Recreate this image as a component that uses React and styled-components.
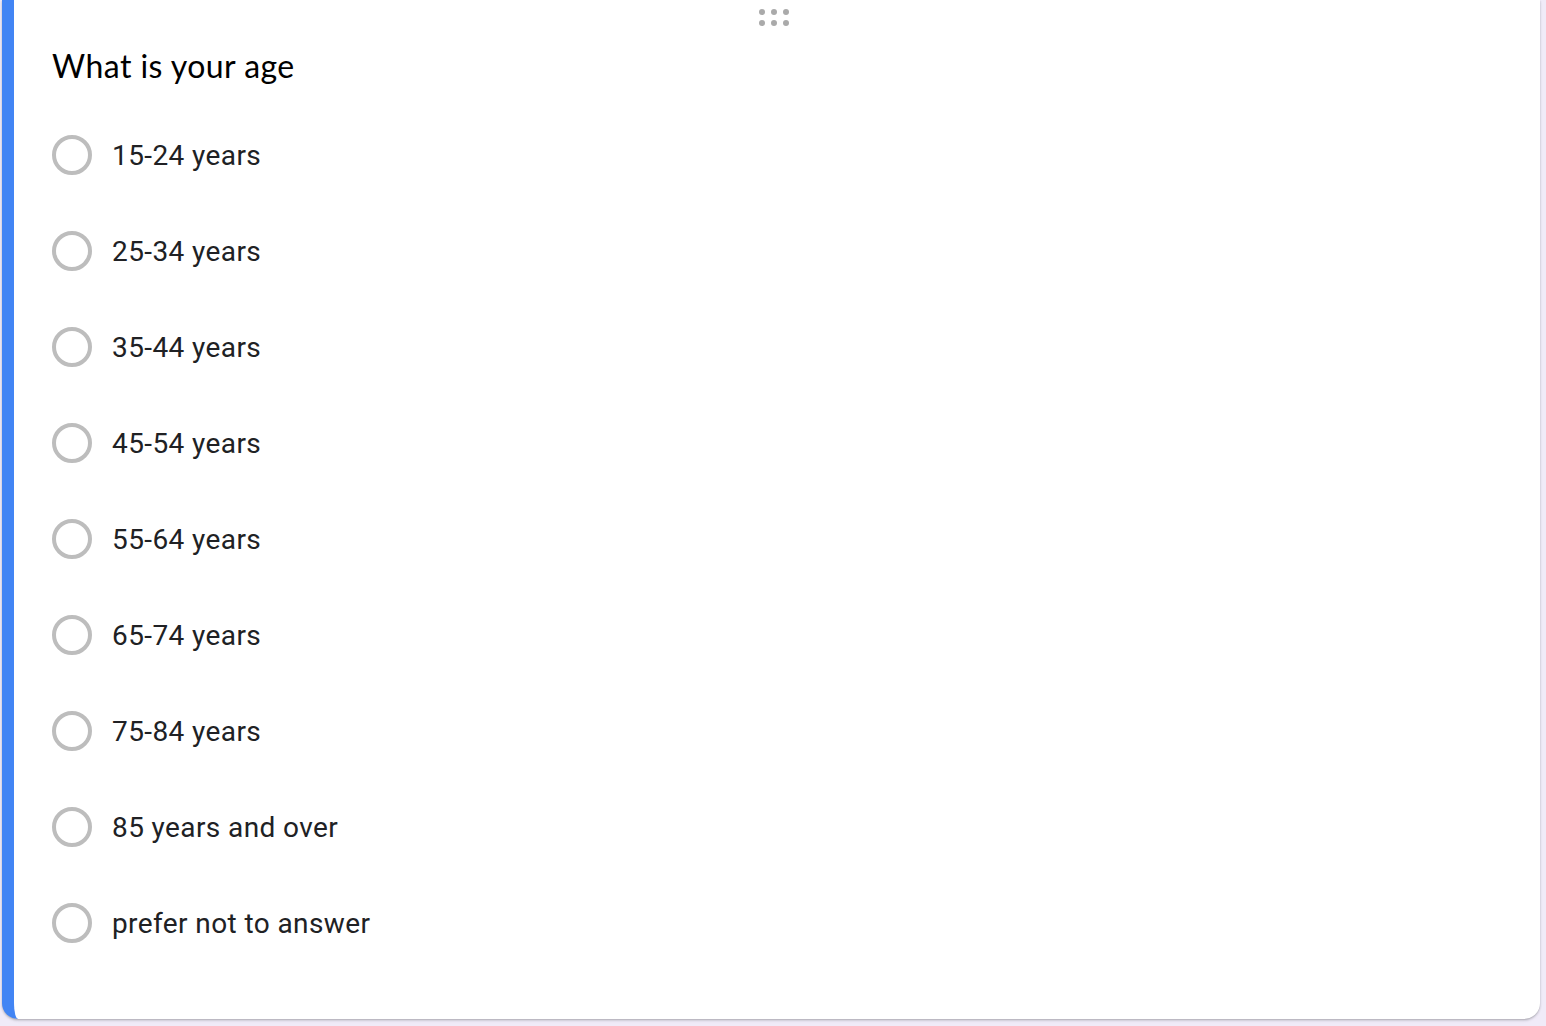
import React from 'react'
import styled, { createGlobalStyle } from 'styled-components'

const Global = createGlobalStyle`
  html, body {
    margin: 0;
    padding: 0;
    background: #f0ebf8;
  }
`

const Page = styled.div`
  width: 1546px;
  height: 1026px;
  padding: 0 6px 7px 2px;
  box-sizing: border-box;
`

const Card = styled.div`
  height: 100%;
  background: #fff;
  border-radius: 0 0 16px 16px;
  border-left: 12px solid #4285f4;
  box-shadow: 0 1px 2px rgba(60, 64, 67, 0.3), 0 2px 3px rgba(60, 64, 67, 0.1);
  box-sizing: border-box;
  padding: 0 0 0 38px;
  display: flex;
  flex-direction: column;
`

/* drag handle, centred on the whole card */
const Handle = styled.div`
  align-self: center;
  margin-left: -44px;
  display: grid;
  grid-template-columns: repeat(3, 6px);
  gap: 5px 6px;
  padding: 9px 0 0;
  height: 26px;
  box-sizing: border-box;
`

const Dot = styled.span`
  width: 6px;
  height: 6px;
  border-radius: 50%;
  background: #aaa;
`

const Title = styled.div`
  font-family: 'Lato', 'Open Sans', sans-serif;
  font-size: 32px;
  line-height: 48px;
  letter-spacing: 0.45px;
  color: #000;
  margin-top: 16px;
`

const Options = styled.div`
  display: flex;
  flex-direction: column;
  margin-top: 17px;
`

const Option = styled.label`
  display: flex;
  align-items: center;
  gap: 20px;
  height: 96px;
  font-family: 'Roboto', sans-serif;
  font-size: 28px;
  letter-spacing: 0.4px;
  color: #202124;
`

const Radio = styled.span`
  width: 40px;
  height: 40px;
  border: 4px solid #bdbdbd;
  border-radius: 50%;
  box-sizing: border-box;
  flex: none;
`

const answers = [
  '15-24 years',
  '25-34 years',
  '35-44 years',
  '45-54 years',
  '55-64 years',
  '65-74 years',
  '75-84 years',
  '85 years and over',
  'prefer not to answer',
]

export default function App() {
  return (
    <>
      <Global />
      <Page>
        <Card>
          <Handle>
            {[0, 1, 2, 3, 4, 5].map(i => <Dot key={i} />)}
          </Handle>
          <Title>What is your age</Title>
          <Options>
            {answers.map(a => (
              <Option key={a}>
                <Radio />
                {a}
              </Option>
            ))}
          </Options>
        </Card>
      </Page>
    </>
  )
}
